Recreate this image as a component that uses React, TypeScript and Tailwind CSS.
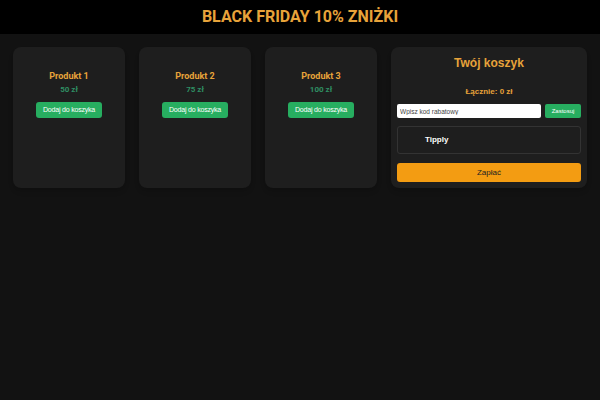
const products = [
  { name: "Produkt 1", price: 50 },
  { name: "Produkt 2", price: 75 },
  { name: "Produkt 3", price: 100 },
];

const ProductCard = ({ name, price }: { name: string; price: number }) => {
  return (
    <div className="flex flex-col items-center w-[112px] h-[141px] bg-[#1e1e1e] rounded-lg pt-[23px] shadow-md">
      <h2 className="text-[9px] leading-[12px] font-bold text-[#e8a33a] font-['Roboto',sans-serif]">
        {name}
      </h2>
      <p className="mt-[3px] text-[8px] leading-[10px] font-bold text-[#2f8f63] font-['Roboto',sans-serif]">
        {price} zł
      </p>
      <button className="mt-[7px] h-[16px] px-[7px] rounded-[3px] bg-[#27ae60] text-white text-[7px] font-['Liberation_Sans',sans-serif] tracking-[-0.2px]">
        Dodaj do koszyka
      </button>
    </div>
  );
};

const Cart = () => {
  return (
    <div className="flex flex-col w-[196px] h-[141px] bg-[#1e1e1e] rounded-lg px-[6px] pt-[8px] shadow-md">
      <h2 className="text-center text-[12px] leading-[16px] font-bold text-[#e8a33a] font-['Liberation_Sans',sans-serif]">
        Twój koszyk
      </h2>
      <p className="mt-[16px] text-center text-[8px] leading-[10px] font-bold text-[#e8a33a] font-['Liberation_Sans',sans-serif]">
        Łącznie: 0 zł
      </p>
      <div className="flex gap-[4px] mt-[7px]">
        <input
          className="w-[144px] h-[14px] bg-white rounded-[2px] px-[3px] text-[6.5px] text-black placeholder:text-[#444] font-['Liberation_Sans',sans-serif] outline-none"
          placeholder="Wpisz kod rabatowy"
        />
        <button className="flex-1 h-[14px] rounded-[2px] bg-[#27ae60] text-white text-[6px] font-['Liberation_Sans',sans-serif]">
          Zastosuj
        </button>
      </div>
      <div className="mt-[8px] h-[28px] border border-[#333] rounded-[3px] flex items-center pl-[27px]">
        <span className="text-white text-[8px] font-bold font-['Liberation_Sans',sans-serif]">Tipply</span>
      </div>
      <button className="mt-[9px] h-[19px] rounded-[3px] bg-[#f39c12] text-[#222] text-[8px] font-['Liberation_Sans',sans-serif]">
        Zapłać
      </button>
    </div>
  );
};

const App = () => {
  return (
    <div className="min-h-screen bg-[#121212]">
      <header className="h-[34px] bg-black flex items-center justify-center">
        <h1 className="text-[16px] font-bold text-[#e8a33a] font-['Roboto',sans-serif]">
          BLACK FRIDAY 10% ZNIŻKI
        </h1>
      </header>
      <div className="flex gap-[14px] px-[13px] pt-[13px]">
        {products.map((p) => (
          <ProductCard key={p.name} name={p.name} price={p.price} />
        ))}
        <Cart />
      </div>
    </div>
  );
};

export default App;
